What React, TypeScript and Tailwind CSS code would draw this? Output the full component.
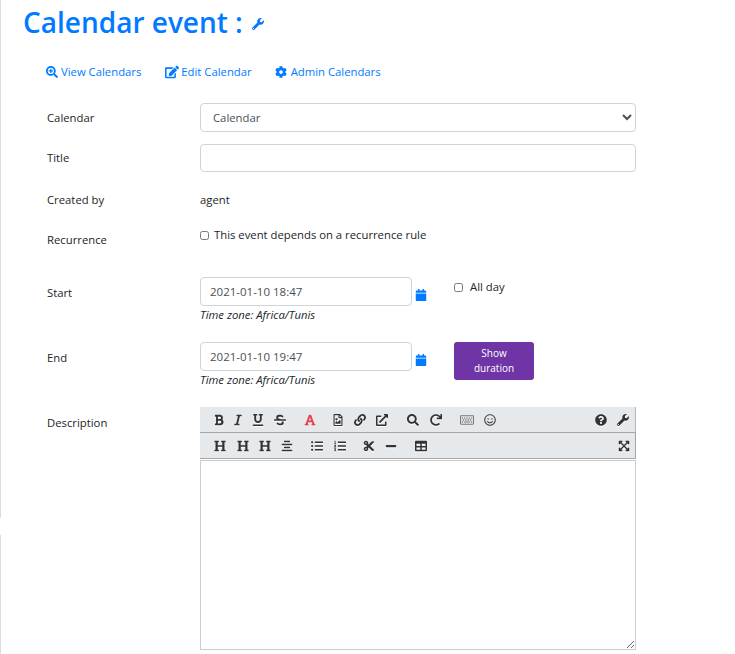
import {
  FaAlignCenter,
  FaBold,
  FaCalendar,
  FaCog,
  FaCut,
  FaEdit,
  FaExpandArrowsAlt,
  FaExternalLinkAlt,
  FaFont,
  FaHeading,
  FaItalic,
  FaLink,
  FaListOl,
  FaListUl,
  FaMinus,
  FaQuestionCircle,
  FaRedo,
  FaRegFileImage,
  FaRegKeyboard,
  FaRegSmile,
  FaSearch,
  FaSearchPlus,
  FaStrikethrough,
  FaTable,
  FaUnderline,
  FaWrench,
} from 'react-icons/fa';
import type { ReactNode } from 'react';

function Row({
  label,
  className,
  labelClass = '',
  children,
}: {
  label: string;
  className: string;
  labelClass?: string;
  children: ReactNode;
}) {
  return (
    <div className={`flex ${className}`}>
      <div className={`w-[153px] shrink-0 ${labelClass}`}>{label}</div>
      <div className="min-w-0 flex-1">{children}</div>
    </div>
  );
}

function DateField({ value }: { value: string }) {
  return (
    <div>
      <div className="flex items-center">
        <input
          readOnly
          value={value}
          className="h-[29px] w-[212px] rounded border border-[#ced4da] px-[9px] text-[11.5px] text-[#495057] outline-none"
        />
        <FaCalendar className="ml-[3px] mt-[6px] size-[12px] text-[#007bff]" />
      </div>
      <div className="mt-[2px] text-[11.3px] leading-[14px] italic text-[#212529]">Time zone: Africa/Tunis</div>
    </div>
  );
}

function Tool({ children, className = '' }: { children: ReactNode; className?: string }) {
  return <span className={`flex h-full w-[14px] shrink-0 items-center justify-center ${className}`}>{children}</span>;
}

export default function App() {
  const ic = 'size-[12px] shrink-0 text-[#333] drop-shadow-[0_1px_0_#fff]';
  return (
    <div className="flex min-h-[654px] bg-white font-['Open_Sans',sans-serif] text-[11.3px] text-[#212529]">
      <div className="flex w-px shrink-0 flex-col">
        <div className="h-[518px] bg-[#dddddd]" />
        <div className="h-[17px]" />
        <div className="flex-1 bg-[#dddddd]" />
      </div>

      <div className="w-[734px] pl-[22px]">
        <h1 className="mt-[2px] flex h-[40px] items-center text-[28px] leading-[40px] font-semibold text-[#007bff]">
          Calendar event :
          <FaWrench className="ml-[9px] mt-[3px] size-[12px]" />
        </h1>

        <div className="mt-[22px] flex h-[16px] items-center pl-[23px] text-[#007bff]">
          <a className="flex items-center gap-[3px]">
            <FaSearchPlus className="size-[12px]" /> View Calendars
          </a>
          <a className="ml-[24px] flex items-center gap-[2px]">
            <FaEdit className="size-[14px]" /> Edit Calendar
          </a>
          <a className="ml-[23px] flex items-center gap-[4px]">
            <FaCog className="size-[12px]" /> Admin Calendars
          </a>
        </div>

        <div className="ml-[24px] w-[589px]">
          <Row label="Calendar" labelClass="pt-[2px]" className="mt-[23px] h-[29px] items-center">
            <select className="h-[29px] w-full rounded border border-[#ced4da] bg-white pl-[8px] text-[11.3px] text-[#495057] outline-none">
              <option>Calendar</option>
            </select>
          </Row>
          <Row label="Title" className="mt-[12px] h-[28px] items-center">
            <input className="h-[28px] w-full rounded border border-[#ced4da] outline-none" />
          </Row>
          <Row label="Created by" className="mt-[14px] h-[28px] items-center">
            agent
          </Row>
          <Row label="Recurrence" className="mt-[15px] h-[28px] pt-[3px]">
            <label className="-mt-[5px] flex items-center gap-[5px]">
              <input type="checkbox" className="size-[9px]" /> This event depends on a recurrence rule
            </label>
          </Row>

          <Row label="Start" className="mt-[20px] pt-[8px]">
            <div className="-mt-[8px] flex">
              <DateField value="2021-01-10 18:47" />
              <label className="ml-[27px] mt-[2px] flex h-[16px] items-center gap-[7px]">
                <input type="checkbox" className="size-[9px]" /> All day
              </label>
            </div>
          </Row>

          <Row label="End" className="mt-[20px] pt-[8px]">
            <div className="-mt-[8px] flex">
              <DateField value="2021-01-10 19:47" />
              <button className="ml-[27px] h-[38px] w-[80px] rounded-[3px] bg-[#6f34a5] text-[10px] leading-[15px] text-white">
                Show
                <br />
                duration
              </button>
            </div>
          </Row>

          <Row label="Description" className="mt-[20px] pt-[8px]">
            <div className="-mt-[8px] w-[436px]">
              <div className="flex h-[25px] items-center border-r border-[#b5b5b5] bg-[#e6e9ec] pl-[12px]">
                <Tool><FaBold className={ic} /></Tool>
                <Tool className="ml-[5px]"><FaItalic className={ic} /></Tool>
                <Tool className="ml-[6px]"><FaUnderline className={ic} /></Tool>
                <Tool className="ml-[8px]"><FaStrikethrough className={ic} /></Tool>
                <Tool className="ml-[16px]"><FaFont className="size-[12px] shrink-0 text-[#e8404f]" /></Tool>
                <Tool className="ml-[14px]"><FaRegFileImage className={ic} /></Tool>
                <Tool className="ml-[8px]"><FaLink className={ic} /></Tool>
                <Tool className="ml-[8px]"><FaExternalLinkAlt className={ic} /></Tool>
                <Tool className="ml-[17px]"><FaSearch className={ic} /></Tool>
                <Tool className="ml-[9px]"><FaRedo className={ic} /></Tool>
                <Tool className="ml-[17px]"><FaRegKeyboard className="size-[14px] shrink-0 text-[#777]" /></Tool>
                <Tool className="ml-[9px]"><FaRegSmile className="size-[12px] shrink-0 text-[#444]" /></Tool>
                <span className="flex-1" />
                <Tool><FaQuestionCircle className={ic} /></Tool>
                <Tool className="ml-[8px] mr-[5px]"><FaWrench className={ic} /></Tool>
              </div>
              <div className="flex h-[27px] items-center border-y border-r border-[#a4a6a8] bg-[#e6e9ec] pl-[13px]">
                <Tool><FaHeading className={ic} /></Tool>
                <Tool className="ml-[9px]"><FaHeading className={ic} /></Tool>
                <Tool className="ml-[8px]"><FaHeading className={ic} /></Tool>
                <Tool className="ml-[8px]"><FaAlignCenter className={ic} /></Tool>
                <Tool className="ml-[16px]"><FaListUl className={ic} /></Tool>
                <Tool className="ml-[9px]"><FaListOl className={ic} /></Tool>
                <Tool className="ml-[15px]"><FaCut className={ic} /></Tool>
                <Tool className="ml-[8px]"><FaMinus className={ic} /></Tool>
                <Tool className="ml-[16px]"><FaTable className={ic} /></Tool>
                <span className="flex-1" />
                <Tool className="mr-[4px]"><FaExpandArrowsAlt className={ic} /></Tool>
              </div>
              <textarea className="mt-px block h-[190px] w-full border border-[#ccc] outline-none" />
            </div>
          </Row>
        </div>
      </div>
    </div>
  );
}
